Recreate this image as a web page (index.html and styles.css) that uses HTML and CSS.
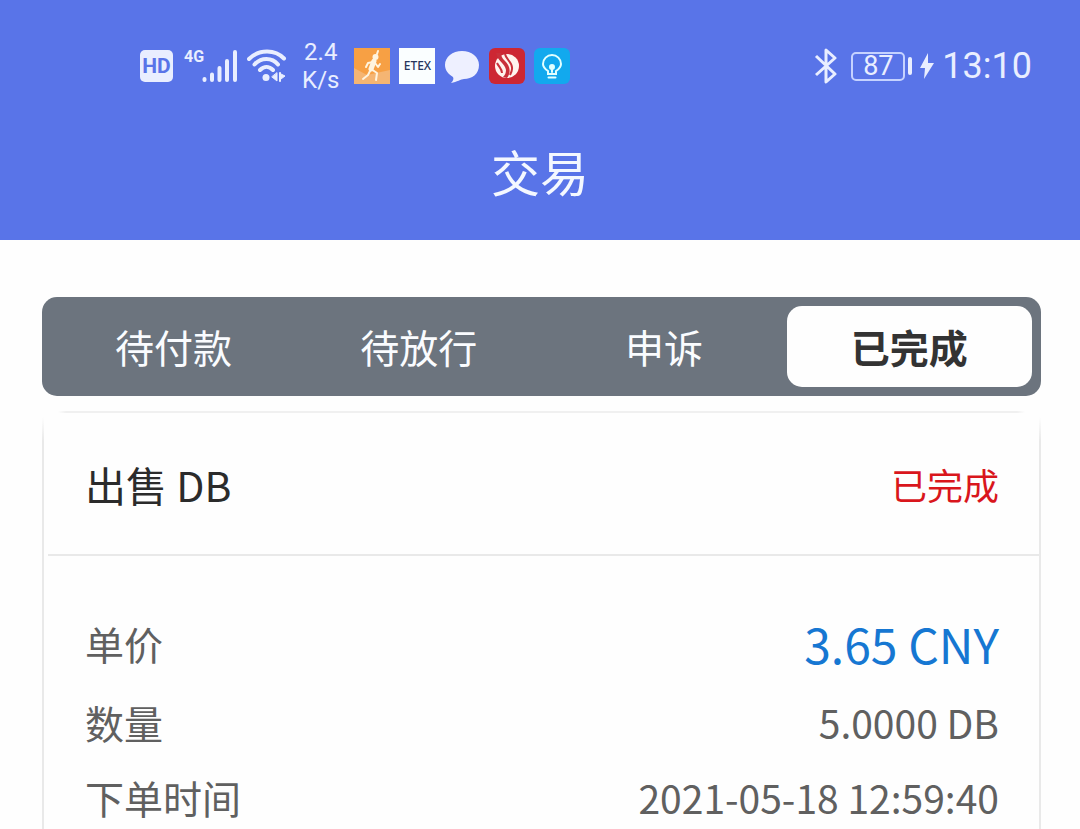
FILE: index.html
```html
<!DOCTYPE html>
<html lang="zh-CN">
<head>
<meta charset="utf-8">
<meta name="viewport" content="width=device-width, initial-scale=1">
<title>交易</title>
<link rel="stylesheet" href="styles.css">
</head>
<body>
<header class="header">
  <div class="status-bar">
    <div class="status-left">
      <div class="badge-hd">HD</div>
      <div class="signal">
        <span class="network">4G</span>
        <svg width="36" height="34" viewBox="0 0 36 34" fill="none" stroke="#e9eeff" stroke-width="4" stroke-linecap="round" aria-hidden="true"><path d="M2.500 30v1M10 25.500V31M17.500 19V31M25 12V31M33 3V31"/></svg>
      </div>
      <svg class="wifi" width="40" height="34" viewBox="0 0 40 34" fill="none" stroke="#e9eeff" stroke-width="4" stroke-linecap="round" aria-hidden="true">
        <path d="M2 10C12 0 28 0 37 9.500M7.500 15.500C14 8 25 8 31 15.500M13 21C17 17 22 17 26 21"/>
        <circle cx="19" cy="28.500" r="3.500" fill="#e9eeff" stroke="none"/>
        <path d="M30 24v8l-5-4zM33 24v8M34 25l4 2-4 3" stroke-width="1" fill="#e9eeff"/>
        <path d="M33 24v8" stroke-width="2"/>
      </svg>
      <div class="speed"><span>2.4</span><span>K/s</span></div>
      <div class="apps">
        <svg width="36" height="36" viewBox="0 0 36 36" aria-hidden="true">
          <path fill="#f7a044" d="M0 0h36v36H0z"/><path fill="#f5b573" d="M0 20l13 7 23-5v14H0z"/>
          <circle cx="21.500" cy="9" r="3" fill="#fff4df"/>
          <path d="M23 6l1-3M20 13l-3 8 6 4-1 7M17 21l-3 6-5 4M19 14l-5 1-2 4M21 15l3 4 2-3" fill="none" stroke="#fff4df" stroke-width="2" stroke-linecap="round" stroke-linejoin="round"/>
          <path d="M20 13l-3 8" stroke="#fff4df" stroke-width="5" stroke-linecap="round"/>
        </svg>
        <div class="app-etex">ETEX</div>
        <svg width="36" height="36" viewBox="0 0 36 36" aria-hidden="true"><path fill="#eef0ff" d="M18 3c9.500 0 17 6 17 14 0 9-7 14-15 14-3 0-7 3-13 4 2-2 3-4 2-6-5-3-8-7-8-12C1 9 8.500 3 18 3z"/></svg>
        <svg width="36" height="36" viewBox="0 0 36 36" aria-hidden="true">
          <rect width="36" height="36" rx="6" fill="#cd2733"/><circle cx="18" cy="18" r="12" fill="#fff4ee"/>
          <path fill="#c9303a" d="M7 5c2 9 9 10 10 17 0 3-1 5-3 7l4 1c5-7 2-13-2-17-3-3-4-5-4-8z"/>
          <path d="M16 6c1 6 8 8 7 15 0 2-1 4-2 6M8 15c2 4 5 6 5 10" fill="none" stroke="#c9303a" stroke-width="2"/>
        </svg>
        <svg width="36" height="36" viewBox="0 0 36 36" fill="none" stroke="#e2ffff" stroke-width="2" stroke-linecap="round" aria-hidden="true">
          <rect width="36" height="36" rx="6" fill="#12a9ee" stroke="none"/>
          <path d="M14 26v-3c-3-2-5-4-5-7a9 9 0 0 1 18 0c0 3-2 5-5 7v3zM14.500 29.500h7M18 19v5"/><circle cx="18" cy="19" r="2" fill="#e2ffff"/>
        </svg>
      </div>
    </div>
    <div class="status-right">
      <svg class="bluetooth" width="24" height="36" viewBox="0 0 24 36" fill="none" stroke="#e9eeff" stroke-width="3" stroke-linejoin="round" aria-hidden="true"><path d="M2 8l19 18-9 8V2l9 8L2 27"/></svg>
      <div class="battery"><span class="battery-body">87</span><span class="battery-cap"></span></div>
      <svg width="14" height="28" viewBox="0 0 14 28" fill="#e9eeff" aria-hidden="true"><path d="M8 1L0 16h5L4 27l10-16H8z"/></svg>
      <time class="clock">13:10</time>
    </div>
  </div>
  <h1 class="title">交易</h1>
</header>
<main class="content">
  <nav class="tabs" aria-label="订单状态">
    <button class="tab" type="button">待付款</button>
    <button class="tab" type="button">待放行</button>
    <button class="tab" type="button">申诉</button>
    <button class="tab tab-active" type="button" aria-current="true">已完成</button>
  </nav>
  <article class="card">
    <div class="card-head">
      <h2 class="card-title">出售 DB</h2>
      <span class="card-status">已完成</span>
    </div>
    <dl class="details">
      <div class="row"><dt>单价</dt><dd class="price">3.65 CNY</dd></div>
      <div class="row"><dt>数量</dt><dd>5.0000 DB</dd></div>
      <div class="row"><dt>下单时间</dt><dd>2021-05-18 12:59:40</dd></div>
    </dl>
  </article>
</main>
</body>
</html>
```

FILE: styles.css
```css
* { box-sizing: border-box; }
body {
  margin: 0;
  min-height: 100vh;
  display: flex;
  flex-direction: column;
  background: #fefefe;
  color: #2b2b2b;
  font-family: "Noto Sans CJK SC", sans-serif;
}
h1, h2, dl, dd { margin: 0; font-weight: 400; }

.header { background: #5974e8; color: #f4f8ff; padding: 36px 48px 32px; }
.status-bar {
  display: flex;
  justify-content: space-between;
  height: 60px;
  color: #e9eeff;
  font-family: Roboto, sans-serif;
}
.status-left, .status-right, .apps, .signal, .battery { display: flex; align-items: center; }
.status-left { padding-left: 92px; }
.status-right { gap: 8px; }
.badge-hd {
  width: 33px;
  border-radius: 5px;
  background: #e9eeff;
  color: #5974e8;
  font-size: 21px;
  font-weight: 700;
  line-height: 32px;
  text-align: center;
}
.signal { margin-left: 11px; }
.network { align-self: flex-start; font-size: 16px; font-weight: 700; line-height: 16px; }
.signal svg { margin-left: -2px; }
.wifi { margin-left: 9px; }
.speed {
  display: flex;
  flex-direction: column;
  align-items: center;
  margin: 0 15px;
  font-size: 24px;
  line-height: 28px;
}
.apps { gap: 9px; }
.app-etex {
  width: 36px;
  background: #fafeff;
  color: #26355c;
  font-family: "Noto Sans", sans-serif;
  font-size: 12px;
  font-weight: 500;
  line-height: 36px;
  text-align: center;
}
.bluetooth { margin-right: 5px; }
.battery { gap: 3px; }
.battery-body {
  width: 54px;
  border: 2px solid #c5d2ff;
  border-radius: 5px;
  font-size: 27px;
  line-height: 25px;
  text-align: center;
}
.battery-cap { width: 4px; height: 18px; border-radius: 2px; background: #e9eeff; }
.clock { font-size: 36px; line-height: 42px; }
.title { padding-top: 38px; font-size: 49px; line-height: 74px; text-align: center; }

.content { flex: 1; display: flex; flex-direction: column; padding: 57px 39px 0 42px; }
.tabs {
  display: grid;
  grid-template-columns: repeat(4, 1fr);
  padding: 9px;
  border-radius: 15px;
  background: #6c747e;
}
.tab {
  padding: 0;
  border: 0;
  border-radius: 15px;
  background: transparent;
  color: #fafcff;
  font-family: inherit;
  font-size: 39px;
  line-height: 81px;
}
.tab-active { background: #fefefe; color: #333; font-weight: 700; }

/* Hairline frame whose edges fade out towards the top corners. */
.card {
  flex: 1;
  margin-top: 15px;
  padding: 2px 2px 0;
  background:
    linear-gradient(90deg, transparent 16px, #f0f0f0 24px, #f0f0f0 calc(100% - 24px), transparent calc(100% - 16px)) top / 100% 2px no-repeat,
    linear-gradient(transparent 6px, #e9e9e9 30px) left / 2px 100% no-repeat,
    linear-gradient(transparent 6px, #e9e9e9 30px) right / 2px 100% no-repeat;
}
.card-head {
  display: flex;
  justify-content: space-between;
  align-items: center;
  height: 143px;
  margin-left: 4px;
  padding: 0 40px 0 37px;
  border-bottom: 2px solid #e9e9e9;
}
.card-title { font-size: 41px; line-height: 60px; }
.card-status { color: #d9161c; font-size: 36px; line-height: 54px; }
.details { display: grid; gap: 13px; padding: 52px 40px 0 41px; color: #606060; }
.row {
  display: flex;
  justify-content: space-between;
  align-items: center;
  font-size: 39px;
  line-height: 62px;
}
.price { color: #1677d2; font-size: 48px; line-height: 70px; }
```
